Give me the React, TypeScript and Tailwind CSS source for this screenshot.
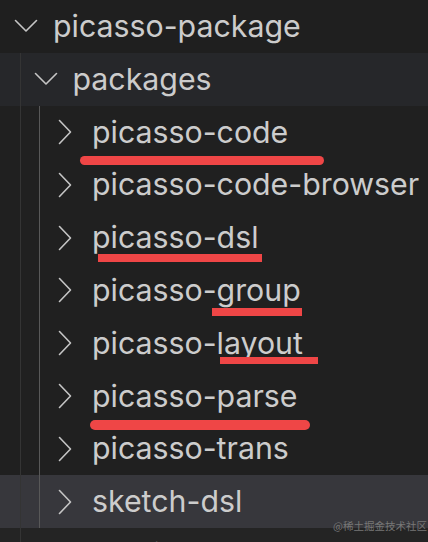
import React from "react";

const ROW = "h-[52.8px]";

function ChevronDown() {
  return (
    <svg width="24" height="14" viewBox="0 0 24 14" fill="none">
      <path d="M1.5 1.5 L12 12 L22.5 1.5" stroke="#c5c5c5" strokeWidth="1.6" strokeLinecap="round" strokeLinejoin="round" />
    </svg>
  );
}

function ChevronRight() {
  return (
    <svg width="14" height="26" viewBox="0 0 14 26" fill="none">
      <path d="M1.5 1.5 L12.5 13 L1.5 24.5" stroke="#c5c5c5" strokeWidth="1.6" strokeLinecap="round" strokeLinejoin="round" />
    </svg>
  );
}

type Item = { name: string; depth: 0 | 1 | 2; open?: boolean; bg: string };

const items: Item[] = [
  { name: "picasso-package", depth: 0, open: true, bg: "bg-[#1f1f1f]" },
  { name: "packages", depth: 1, open: true, bg: "bg-[#26272a]" },
  { name: "picasso-code", depth: 2, bg: "" },
  { name: "picasso-code-browser", depth: 2, bg: "" },
  { name: "picasso-dsl", depth: 2, bg: "" },
  { name: "picasso-group", depth: 2, bg: "" },
  { name: "picasso-layout", depth: 2, bg: "" },
  { name: "picasso-parse", depth: 2, bg: "" },
  { name: "picasso-trans", depth: 2, bg: "" },
  { name: "sketch-dsl", depth: 2, bg: "bg-[#37373c]" },
];

const padFor = ["pl-[14px]", "pl-[33.5px]", "pl-[53px]"];

export default function App() {
  return (
    <div
      className="relative w-[428px] h-[542px] overflow-hidden bg-[#202020] text-[#cccccc]"
      style={{ fontFamily: "Inter, 'Noto Sans', 'Liberation Sans', sans-serif" }}
    >
      <div className="flex flex-col">
        {items.map((it) => (
          <div key={it.name} className={`${ROW} ${it.bg} ${padFor[it.depth]} flex items-center`}>
            <div className="w-[24px] flex items-center justify-center shrink-0">
              {it.open ? <ChevronDown /> : <ChevronRight />}
            </div>
            <span className="ml-[15px] text-[30.3px] leading-[52.8px] whitespace-nowrap">
              {it.name}
            </span>
          </div>
        ))}
        <div className={`${ROW} bg-[#242424] pl-[33.5px] flex items-center`}>
          <div className="w-[24px] flex items-center justify-center shrink-0 text-[#cbcb41] text-[26px] font-bold leading-none">
            {"{}"}
          </div>
          <span className="ml-[15px] text-[30.3px] leading-[52.8px] whitespace-nowrap">lerna.json</span>
        </div>
      </div>

      {/* indent guides */}
      <div className="absolute left-[20px] top-[52.8px] w-px h-[490px] bg-[#343434]" />
      <div className="absolute left-[39px] top-[105.6px] w-px h-[422px] bg-[#585858]" />

      {/* red annotation underlines */}
      <div className="absolute left-[80px] top-[156px] w-[244px] h-[9px] rounded-full bg-[#ef4646]" />
      <div className="absolute left-[98px] top-[254px] w-[164px] h-[8px] bg-[#ef4646]" />
      <div className="absolute left-[212px] top-[308px] w-[90px] h-[8px] bg-[#ef4646]" />
      <div className="absolute left-[220px] top-[357px] w-[98px] h-[7px] bg-[#ef4646]" />
      <div className="absolute left-[90px] top-[420px] w-[220px] h-[10px] rounded-full bg-[#ef4646]" />

      {/* watermark */}
      <div
        className="absolute left-[333px] top-[519px] text-[10.5px] leading-[14px] text-[#777777] whitespace-nowrap"
        style={{ fontFamily: "'Noto Sans CJK SC', 'Noto Sans', sans-serif" }}
      >
        @稀土掘金技术社区
      </div>
    </div>
  );
}
